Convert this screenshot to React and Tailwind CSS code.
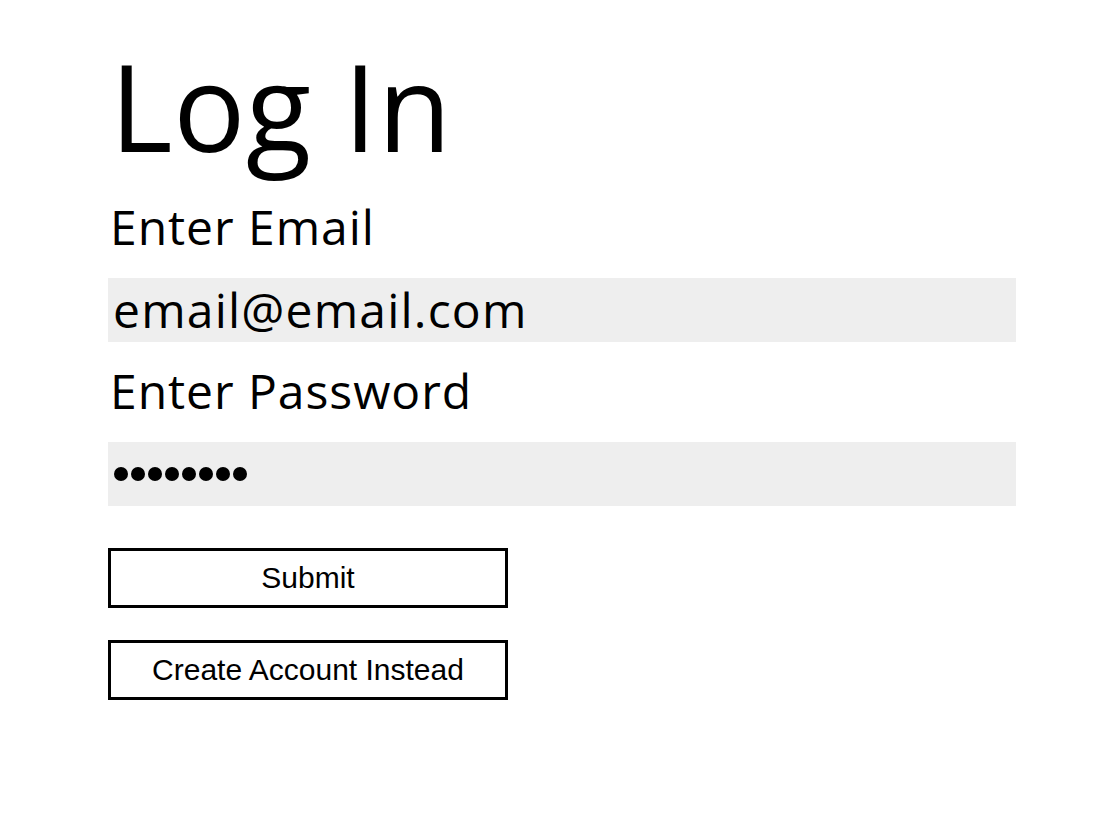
export default function App() {
  const f = { fontFamily: "'Open Sans', 'Noto Sans', sans-serif" };
  return (
    <div className="w-[1106px] h-[834px] bg-white text-black pl-[108px]" style={f}>
      <h1 className="text-[120px] leading-[120px] pt-[46px] pl-[2px] m-0 font-normal tracking-[0.005em]">Log In</h1>
      <div className="text-[48px] leading-[58px] pl-[2px] mt-[32px] tracking-[0.02em]">Enter Email</div>
      <div className="mt-[22px] w-[908px] h-[64px] bg-[#eeeeee] text-[48px] leading-[64px] pl-[5px] tracking-[0.025em]">email@email.com</div>
      <div className="text-[48px] leading-[58px] pl-[2px] mt-[20px] tracking-[0.02em]">Enter Password</div>
      <div className="mt-[22px] w-[908px] h-[64px] bg-[#eeeeee] flex items-center gap-[3px] pl-[6px]">
        {Array.from({ length: 8 }).map((_, i) => (
          <span key={i} className="block w-[14px] h-[14px] rounded-full bg-black" />
        ))}
      </div>
      <div className="mt-[42px] flex flex-col gap-[32px]" style={{ fontFamily: "'Liberation Sans', Arial, sans-serif" }}>
        <button className="w-[400px] h-[60px] border-[3px] border-black bg-white text-[30px] leading-none text-black">Submit</button>
        <button className="w-[400px] h-[60px] border-[3px] border-black bg-white text-[30px] leading-none text-black">Create Account Instead</button>
      </div>
    </div>
  );
}
